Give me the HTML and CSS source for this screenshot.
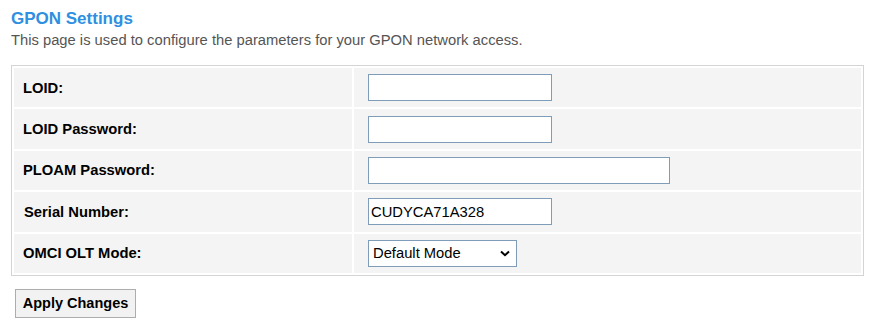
FILE: index.html
```html
<!DOCTYPE html>
<html lang="en">
<head>
    <meta charset="UTF-8">
    <title>GPON Settings</title>
    <link rel="stylesheet" href="styles.css">
</head>
<body>
    <h1 class="page-title">GPON Settings</h1>
    <p class="page-desc">This page is used to configure the parameters for your GPON network access.</p>
    <form id="gponForm">
        <table class="settings-table">
            <tr>
                <td class="label-cell">LOID:</td>
                <td class="field-cell"><input type="text" class="text-field" name="loid"></td>
            </tr>
            <tr>
                <td class="label-cell">LOID Password:</td>
                <td class="field-cell"><input type="text" class="text-field" name="loid_pwd"></td>
            </tr>
            <tr>
                <td class="label-cell">PLOAM Password:</td>
                <td class="field-cell"><input type="text" class="text-field wide" name="ploam_pwd"></td>
            </tr>
            <tr>
                <td class="label-cell indent">Serial Number:</td>
                <td class="field-cell"><input type="text" class="text-field" name="sn" value="CUDYCA71A328"></td>
            </tr>
            <tr>
                <td class="label-cell">OMCI OLT Mode:</td>
                <td class="field-cell">
                    <span class="select-wrap">
                        <select class="select-field" name="omci_mode">
                            <option selected>Default Mode</option>
                            <option>Huawei OLT Mode</option>
                            <option>ZTE OLT Mode</option>
                            <option>Customized Mode</option>
                        </select>
                        <svg class="select-arrow" width="10" height="7" viewBox="0 0 10 7">
                            <path d="M1 1.5 L5 5.2 L9 1.5" fill="none" stroke="#000" stroke-width="2"/>
                        </svg>
                    </span>
                </td>
            </tr>
        </table>
        <button type="submit" class="apply-btn">Apply Changes</button>
    </form>
</body>
</html>
```

FILE: styles.css
```css
:root {
    --title-blue: #2f8fe0;
    --text-gray: #555555;
    --cell-bg: #f4f4f4;
    --table-border: #d4d4d4;
    --field-border: #7f9db9;
}

body {
    margin: 0;
    padding: 9px 11px;
    font-family: "Liberation Sans", Arial, sans-serif;
    background: #ffffff;
    color: #000000;
}

.page-title {
    margin: 0;
    font-size: 17px;
    line-height: 20px;
    font-weight: bold;
    color: var(--title-blue);
}

.page-desc {
    margin: 3px 0 0;
    font-size: 14.75px;
    line-height: 17px;
    color: var(--text-gray);
}

.settings-table {
    margin-top: 16px;
    width: 853px;
    border: 1px solid var(--table-border);
    border-spacing: 2px;
}

.settings-table td {
    background: var(--cell-bg);
    height: 39.4px;
    padding: 0;
    vertical-align: middle;
}

.label-cell {
    box-sizing: border-box;
    width: 338px;
    padding-left: 9px !important;
    font-size: 14.75px;
    font-weight: bold;
}

.label-cell.indent {
    padding-left: 10px !important;
}

.field-cell {
    padding-left: 14px !important;
}

.text-field {
    display: block;
    box-sizing: border-box;
    width: 184px;
    height: 27px;
    margin: 0;
    padding: 0 2px;
    border: 1px solid var(--field-border);
    background: #ffffff;
    font-family: "Liberation Sans", Arial, sans-serif;
    font-size: 14.75px;
    color: #000000;
}

.text-field.wide {
    width: 302px;
}

/* select with custom chevron */
.select-wrap {
    position: relative;
    display: block;
    width: 149px;
}

.select-field {
    display: block;
    box-sizing: border-box;
    width: 149px;
    height: 27px;
    margin: 0;
    padding: 0 4px;
    border: 1px solid var(--field-border);
    border-radius: 0;
    background: #ffffff;
    font-family: "Liberation Sans", Arial, sans-serif;
    font-size: 14.75px;
    color: #000000;
    appearance: none;
    -webkit-appearance: none;
}

.select-arrow {
    position: absolute;
    right: 7px;
    top: 10px;
    pointer-events: none;
}

.apply-btn {
    display: block;
    margin: 13px 0 0 4px;
    box-sizing: border-box;
    width: 121px;
    height: 29px;
    padding: 0;
    border: 1px solid #adadad;
    border-radius: 0;
    background: #f2f2f2;
    font-family: "Liberation Sans", Arial, sans-serif;
    font-size: 14.5px;
    font-weight: bold;
    color: #000000;
}
```
